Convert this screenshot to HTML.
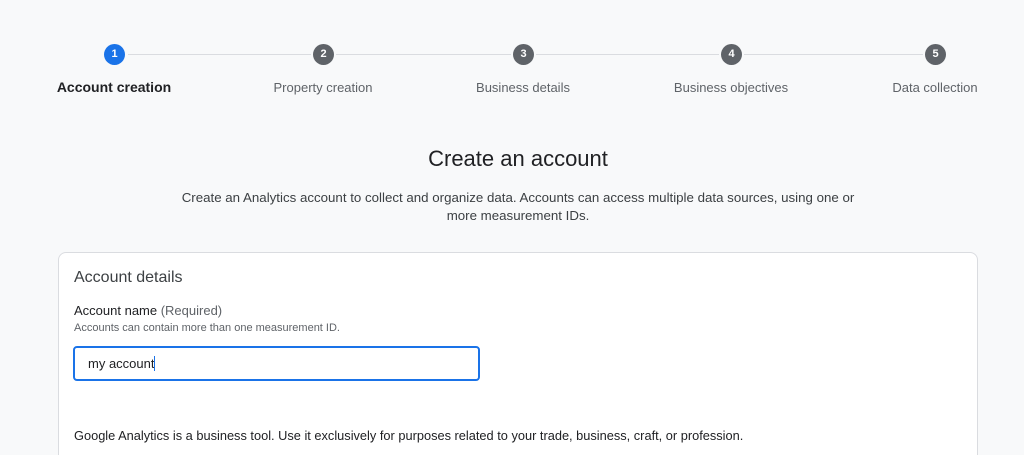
<!DOCTYPE html>
<html style="overflow:hidden;height:455px"><head><style>
body{margin:0;width:1024px;height:455px;overflow:hidden;background:#f8f9fa;font-family:"Liberation Sans",Arial,sans-serif;position:relative;color:#202124}
.a{position:absolute}
.c{position:absolute;width:21px;height:21px;border-radius:50%;background:#5f6368;color:#fff;font-size:11px;font-weight:bold;text-align:center;line-height:21px;top:44px}
.l{position:absolute;top:54px;height:1px;background:#dadce0}
.t{position:absolute;top:80px;font-size:13px;color:#5f6368;white-space:nowrap;transform:translateX(-50%)}
</style></head><body>
<div class="l" style="left:128px;width:183px"></div>
<div class="l" style="left:336px;width:175px"></div>
<div class="l" style="left:536px;width:183px"></div>
<div class="l" style="left:744px;width:179px"></div>
<div class="c" style="left:104px;background:#1a73e8">1</div>
<div class="c" style="left:313px">2</div>
<div class="c" style="left:513px">3</div>
<div class="c" style="left:721px">4</div>
<div class="c" style="left:925px">5</div>
<div class="t" style="left:114px;color:#202124;font-weight:bold;font-size:14px;top:79px">Account creation</div>
<div class="t" style="left:323px">Property creation</div>
<div class="t" style="left:523px">Business details</div>
<div class="t" style="left:731px">Business objectives</div>
<div class="t" style="left:935px">Data collection</div>
<div class="a" style="left:0;width:1036px;top:146px;text-align:center;font-size:22px;color:#202124">Create an account</div>
<div class="a" style="left:168px;width:700px;top:189px;text-align:center;font-size:13.3px;line-height:18px;color:#3c4043">Create an Analytics account to collect and organize data. Accounts can access multiple data sources, using one or<br>more measurement IDs.</div>
<div class="a" style="left:58px;top:252px;width:918px;height:215px;background:#fff;border:1px solid #dadce0;border-radius:8px"></div>
<div class="a" style="left:74px;top:269px;font-size:16px;color:#3c4043">Account details</div>
<div class="a" style="left:74px;top:303px;font-size:13px;color:#202124">Account name <span style="color:#5f6368">(Required)</span></div>
<div class="a" style="left:74px;top:322px;font-size:11px;color:#5f6368">Accounts can contain more than one measurement ID.</div>
<div class="a" style="left:73px;top:346px;width:403px;height:31px;border:2px solid #1a73e8;border-radius:4px;background:#fff"></div>
<div class="a" style="left:88px;top:356px;font-size:13px;color:#202124">my account<span style="display:inline-block;width:1px;height:15px;background:#1a73e8;vertical-align:-3px"></span></div>
<div class="a" style="left:74px;top:428px;font-size:12.8px;color:#202124;white-space:nowrap">Google Analytics is a business tool. Use it exclusively for purposes related to your trade, business, craft, or profession.</div>
</body></html>
